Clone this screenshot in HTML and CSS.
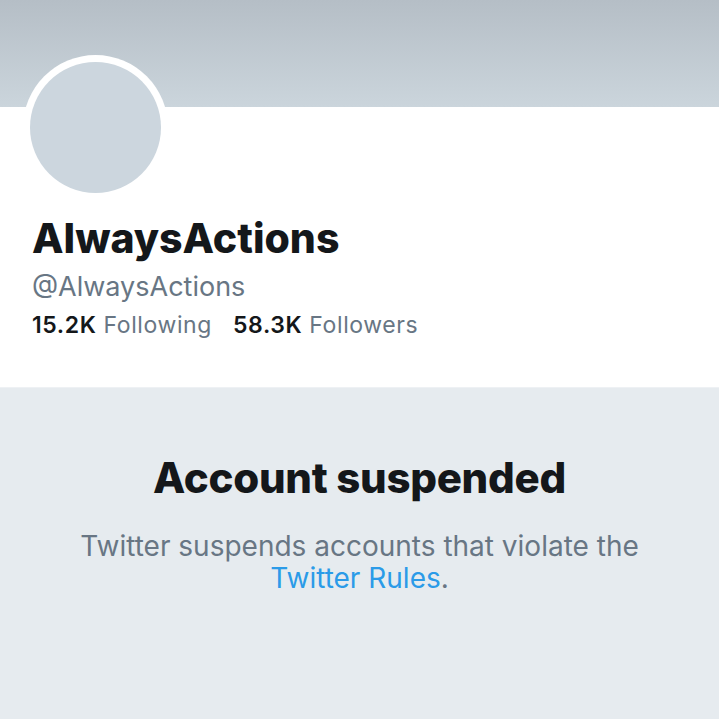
FILE: index.html
```html
<!DOCTYPE html>
<html lang="en">
<head>
<meta charset="utf-8">
<title>AlwaysActions</title>
<link rel="stylesheet" href="styles.css">
</head>
<body>
<div class="page">
  <div class="banner"></div>
  <section class="profile">
    <div class="avatar"><div class="avatar-inner"></div></div>
    <h1 class="name">AlwaysActions</h1>
    <div class="handle">@AlwaysActions</div>
    <div class="stats">
      <span class="stat"><b>15.2K</b> Following</span>
      <span class="stat"><b>58.3K</b> Followers</span>
    </div>
  </section>
  <section class="suspended">
    <h2 class="title">Account suspended</h2>
    <p class="msg">Twitter suspends accounts that violate the<br><a class="link" href="#">Twitter Rules</a>.</p>
  </section>
</div>
</body>
</html>
```
FILE: styles.css
```css
html, body {
  margin: 0;
  padding: 0;
  background: #e6ebef;
}
.page {
  width: 719px;
  height: 719px;
  overflow: hidden;
  display: flex;
  flex-direction: column;
  font-family: Inter, "Liberation Sans", sans-serif;
}
.banner {
  height: 107px;
  flex: none;
  background: linear-gradient(to bottom, #b5bec6, #cbd5dc);
}
.profile {
  background: #fff;
  height: 280px;
  flex: none;
  padding-left: 32px;
  box-sizing: border-box;
}
.avatar {
  width: 145px;
  height: 145px;
  box-sizing: border-box;
  border-radius: 50%;
  background: #fff;
  padding: 7px;
  margin-top: -52px;
  margin-left: -9px;
}
.avatar-inner {
  width: 100%;
  height: 100%;
  border-radius: 50%;
  background: #ccd6de;
}
.name {
  margin: 14px 0 0;
  font-size: 41px;
  font-weight: 800;
  line-height: 48px;
  color: #14171a;
}
.handle {
  font-size: 27px;
  line-height: 32px;
  color: #687684;
  margin-top: 9px;
}
.stats {
  font-size: 23px;
  line-height: 28px;
  color: #687684;
  margin-top: 8px;
  letter-spacing: 0.6px;
  display: flex;
  gap: 21px;
}
.stat b {
  color: #14171a;
  font-weight: 600;
}
.suspended {
  flex: 1;
  border-top: 1px solid #eef1f4;
  background: #e6ebef;
  display: flex;
  flex-direction: column;
  align-items: center;
  text-align: center;
}
.title {
  margin: 65px 0 0;
  font-size: 42px;
  font-weight: 800;
  line-height: 50px;
  color: #14171a;
  letter-spacing: -0.3px;
}
.msg {
  margin: 27px 0 0;
  font-size: 28px;
  line-height: 32px;
  color: #687684;
}
.link {
  color: #2b9be8;
  text-decoration: none;
}
```
